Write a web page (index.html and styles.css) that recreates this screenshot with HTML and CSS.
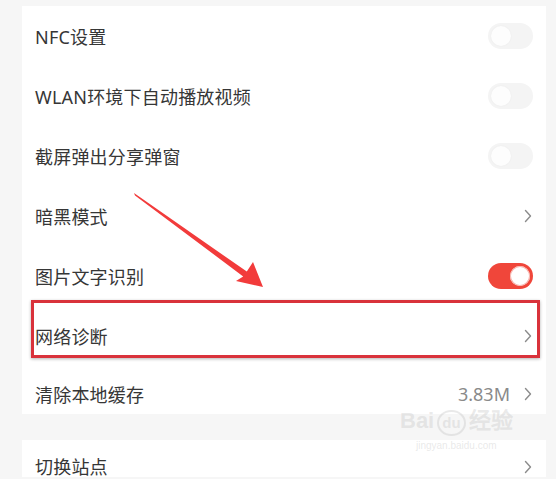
FILE: index.html
```html
<!DOCTYPE html>
<html lang="zh-CN">
<head>
    <meta charset="UTF-8">
    <meta name="viewport" content="width=device-width, initial-scale=1.0">
    <title>设置</title>
    <link rel="stylesheet" href="styles.css">
</head>
<body>
    <div class="screen">
        <div class="card first">
            <div class="row">
                <span class="label">NFC设置</span>
                <span class="switch"><span class="knob"></span></span>
            </div>
            <div class="row">
                <span class="label">WLAN环境下自动播放视频</span>
                <span class="switch"><span class="knob"></span></span>
            </div>
            <div class="row">
                <span class="label">截屏弹出分享弹窗</span>
                <span class="switch"><span class="knob"></span></span>
            </div>
            <div class="row">
                <span class="label">暗黑模式</span>
                <svg class="chev" width="8" height="14" viewBox="0 0 8 14"><polyline points="1.5,1.5 6.5,7 1.5,12.5" /></svg>
            </div>
            <div class="row">
                <span class="label">图片文字识别</span>
                <span class="switch on"><span class="knob"></span></span>
            </div>
            <div class="row">
                <span class="label">网络诊断</span>
                <svg class="chev" width="8" height="14" viewBox="0 0 8 14"><polyline points="1.5,1.5 6.5,7 1.5,12.5" /></svg>
            </div>
            <div class="row last">
                <span class="label">清除本地缓存</span>
                <span class="value">3.83M</span>
                <svg class="chev" width="8" height="14" viewBox="0 0 8 14"><polyline points="1.5,1.5 6.5,7 1.5,12.5" /></svg>
            </div>
        </div>
        <div class="card">
            <div class="row end">
                <span class="label">切换站点</span>
                <svg class="chev" width="8" height="14" viewBox="0 0 8 14"><polyline points="1.5,1.5 6.5,7 1.5,12.5" /></svg>
            </div>
        </div>
    </div>

    <!-- 标注：红框和箭头 -->
    <div class="mark"></div>
    <svg class="arrow" width="556" height="479" viewBox="0 0 556 479">
        <polygon points="134,193 246.8,271.6 253,262 263,287 236,281 243.2,276.4 135,195.5" />
    </svg>

    <div class="watermark">
        <div class="wm-logo">Bai<span class="wm-du">du</span>经验</div>
        <div class="wm-url">jingyan.baidu.com</div>
    </div>
</body>
</html>
```

FILE: styles.css
```css
body{margin: 0; background-color: #f6f6f6; font-family: "Noto Sans", "Noto Sans CJK SC", sans-serif; color: #363636;}
.screen{padding: 6px 10px 0 22px;}
.card{background-color: #fff;}
.card.first{margin-bottom: 26px;}
.row{display: flex; align-items: center; height: 60px; padding: 0 13px 0 13px;}
.row.last{height: 48px; padding-top: 8px; box-sizing: border-box;}
.row.end{height: 37px; align-items: flex-end;}
.label{flex: 1; font-size: 18px; letter-spacing: 0.2px;}
.row.end .label{line-height: 20px;}
.value{font-size: 18px; color: #8a8a8a; margin-right: 14px;}
.chev{margin-right: 1px;}
.row.end .chev{margin-bottom: 3px;}
.chev polyline{fill: none; stroke: #8c8c8c; stroke-width: 1.4; stroke-linecap: round; stroke-linejoin: round;}

.switch{width: 45px; height: 26px; border-radius: 13px; background-color: #f4f4f4; display: flex; align-items: center; padding: 0 3px; box-sizing: border-box;}
.switch .knob{width: 20px; height: 20px; border-radius: 50%; background-color: #fdfdfd; box-shadow: 0 0 2px rgba(0,0,0,0.05);}
.switch.on{background-color: #f0463a; justify-content: flex-end;}
.switch.on .knob{background-color: #fff; box-shadow: inset 0 0 0 1px #f7b3ac;}

.mark{position: absolute; left: 31px; top: 300px; width: 503px; height: 52px; border: 3px solid #d9323b; box-shadow: 0 1px 3px rgba(0,0,0,0.3);}
.arrow{position: absolute; left: 0; top: 0;}
.arrow polygon{fill: #f23b3b;}

.watermark{position: absolute; left: 400px; top: 410px; color: rgba(200,200,200,0.4); font-family: "Liberation Sans", sans-serif; text-align: center;}
.wm-logo{font-size: 22px; font-weight: bold; line-height: 22px;}
.wm-du{display: inline-block; border-radius: 50%; font-size: 15px; padding: 0 3px; border: 2px solid rgba(200,200,200,0.4); margin: 0 3px;}
.wm-url{font-size: 10px; margin-top: 4px;}
```
